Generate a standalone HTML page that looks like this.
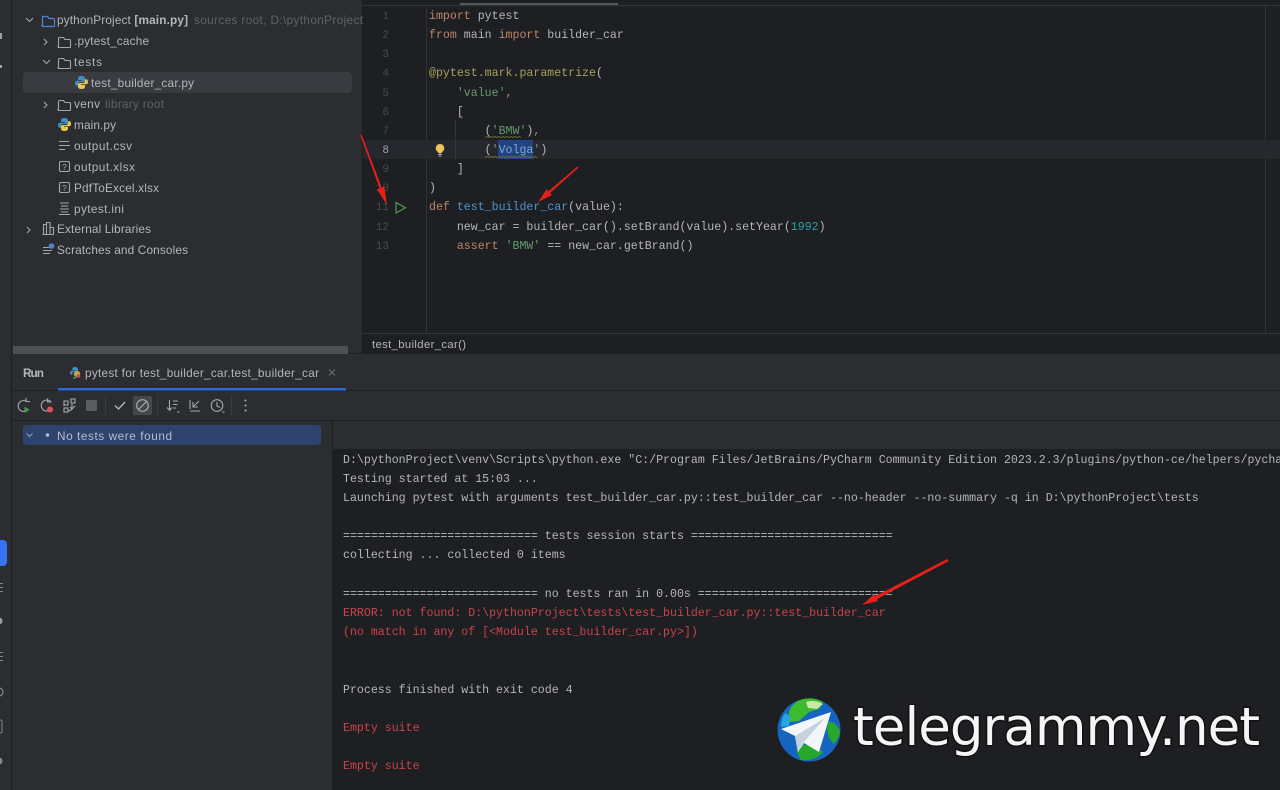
<!DOCTYPE html>
<html lang="en">
<head>
<meta charset="utf-8">
<title>PyCharm pytest</title>
<style>
html,body{margin:0;padding:0;width:1280px;height:790px;overflow:hidden;background:#1e1f22}
svg{display:block;position:absolute;left:0;top:0;filter:blur(.3px)}
.s{font-family:"Liberation Sans",sans-serif;font-size:11.8px;fill:#b4b6bc}
.g{fill:#5f6268}
.m{font-family:"Liberation Mono",monospace;font-size:11.6px;fill:#b4b6bc;white-space:pre}
.k{fill:#bd8468}.st{fill:#639c6b}.d{fill:#a6a25c}.f{fill:#4f93cc}.n{fill:#2a9fa9}
.l{font-family:"Liberation Mono",monospace;font-size:11px;fill:#484b52}
.e{fill:#c9434b}
.i{fill:none;stroke:#a5a7ad;stroke-width:1.1}
</style>
</head>
<body>
<svg width="1280" height="790" viewBox="0 0 1280 790" xmlns="http://www.w3.org/2000/svg">
<!-- panels -->
<rect x="0" y="0" width="1280" height="790" fill="#1e1f22"/>
<rect x="0" y="0" width="362" height="354" fill="#2b2d30"/>
<rect x="0" y="354" width="1280" height="436" fill="#2b2d30"/>
<rect x="333" y="449" width="947" height="341" fill="#1e1f22"/>
<rect x="11" y="0" width="1" height="790" fill="#1e1f22"/>
<rect x="362" y="0" width="1" height="354" fill="#1e1f22"/>
<rect x="362" y="5" width="918" height="1" fill="#34363a"/>
<rect x="460" y="3" width="158" height="2" fill="#55575c"/>
<rect x="362" y="333" width="918" height="1" fill="#34363a"/>
<rect x="426" y="6" width="1" height="327" fill="#303236"/>
<rect x="1265" y="6" width="1" height="327" fill="#303236"/>
<rect x="12" y="353" width="1268" height="1" fill="#1e1f22"/>
<rect x="12" y="390" width="1268" height="1" fill="#1e1f22"/>
<rect x="12" y="420" width="1268" height="1" fill="#1e1f22"/>
<rect x="332" y="420" width="1" height="370" fill="#1e1f22"/>

<!-- left strip -->
<rect x="-6" y="540" width="13" height="26" rx="4" fill="#3574f0"/>
<rect x="0" y="33" width="2" height="6" fill="#a0a2a8"/>
<rect x="0" y="65" width="2" height="3" fill="#a0a2a8"/>
<rect x="0" y="583" width="3" height="1" fill="#85878c"/><rect x="0" y="587" width="3" height="1" fill="#85878c"/><rect x="0" y="591" width="3" height="1" fill="#85878c"/>
<circle cx="-1" cy="621" r="3.5" fill="#9a9ca2"/>
<rect x="0" y="652" width="3" height="1" fill="#85878c"/><rect x="0" y="656" width="3" height="1" fill="#85878c"/><rect x="0" y="660" width="3" height="1" fill="#85878c"/>
<circle cx="-1" cy="692" r="4" fill="none" stroke="#85878c" stroke-width="1.2"/>
<rect x="-5" y="720" width="7" height="13" rx="1.5" fill="none" stroke="#85878c"/>
<circle cx="-1" cy="761" r="3.5" fill="#85878c"/>

<!-- project tree -->
<rect x="23" y="72" width="329" height="21" rx="4" fill="#393b40"/>
<path d="M26 18l3.5 3.5 3.5-3.5" class="i"/>
<path d="M44 39l3 3-3 3" class="i"/>
<path d="M43 60l3.5 3.5 3.5-3.5" class="i"/>
<path d="M44 102l3 3-3 3" class="i"/>
<path d="M27 227l3 3-3 3" class="i"/>
<path d="M42.500 25.500v-8a1 1 0 0 1 1-1h4l1.500 2h4.500a1 1 0 0 1 1 1v6a1 1 0 0 1-1 1h-10.500a1 1 0 0 1-1-.999z" fill="none" stroke="#4f83d6" stroke-width="1.2"/>
<path d="M58.500 46.500v-8a1 1 0 0 1 1-1h4l1.500 2h4.500a1 1 0 0 1 1 1v6a1 1 0 0 1-1 1h-10.500a1 1 0 0 1-1-1z" class="i"/>
<path d="M58.500 67.500v-8a1 1 0 0 1 1-1h4l1.500 2h4.500a1 1 0 0 1 1 1v6a1 1 0 0 1-1 1h-10.500a1 1 0 0 1-1-1z" class="i"/>
<path d="M58.500 109.500v-8a1 1 0 0 1 1-1h4l1.500 2h4.500a1 1 0 0 1 1 1v6a1 1 0 0 1-1 1h-10.500a1 1 0 0 1-1-1z" class="i"/>

<!-- python icons -->
<g transform="translate(75,76)">
<path d="M6.500 0C4 0 3 1 3 2.500V4h4v.8H1.500C.5 4.800 0 6 0 7s.5 2.800 1.500 2.800H3V8c0-1 .8-2 2-2h3.500C9.500 6 10 5.200 10 4.500V2.500C10 1 9 0 6.500 0z" fill="#3f8fc4"/>
<path d="M6.500 13c2.500 0 3.500-1 3.500-2.500V9H6v-.8h5.500c1 0 1.500-1.200 1.500-2.200s-.5-2.800-1.500-2.800H10V5c0 1-.8 2-2 2H4.500C3.500 7 3 7.800 3 8.500v2C3 12 4 13 6.500 13z" fill="#e9c84e"/>
</g>
<g transform="translate(58,118)">
<path d="M6.500 0C4 0 3 1 3 2.500V4h4v.8H1.500C.5 4.800 0 6 0 7s.5 2.800 1.500 2.800H3V8c0-1 .8-2 2-2h3.500C9.500 6 10 5.200 10 4.500V2.500C10 1 9 0 6.500 0z" fill="#3f8fc4"/>
<path d="M6.500 13c2.500 0 3.500-1 3.500-2.500V9H6v-.8h5.500c1 0 1.500-1.200 1.500-2.200s-.5-2.800-1.500-2.800H10V5c0 1-.8 2-2 2H4.500C3.500 7 3 7.800 3 8.500v2C3 12 4 13 6.500 13z" fill="#e9c84e"/>
</g>
<!-- csv -->
<path d="M59 141.500h10M59 145.500h11M59 149.500h6" class="i"/>
<!-- unknown files -->
<rect x="59.500" y="161.500" width="10" height="10" rx="1.500" class="i"/>
<text x="62" y="170" font-family="Liberation Sans" font-size="8.500" fill="#a5a7ad">?</text>
<rect x="59.500" y="182.500" width="10" height="10" rx="1.500" class="i"/>
<text x="62" y="191" font-family="Liberation Sans" font-size="8.500" fill="#a5a7ad">?</text>
<!-- ini -->
<path d="M60 203h9M61 206h7M60 209h9M61 212h7M59 214.500h11" class="i"/>
<!-- libraries -->
<path d="M43.500 234.500v-10h3v10M46.500 234.500v-12h3.500v12M50 234.500v-7h3.500v7M42.500 234.500h11.500" class="i"/>
<!-- scratches -->
<path d="M43 247.500h8M43 250.500h9M43 253.500h7" class="i"/>
<circle cx="51.500" cy="246" r="2.800" fill="#4f83d6"/>

<text class="s" x="57" y="24" textLength="131" lengthAdjust="spacing">pythonProject <tspan font-weight="bold">[main.py]</tspan></text>
<text class="s g" x="194" y="24" textLength="169" lengthAdjust="spacing">sources root,  D:\pythonProject</text>
<text class="s" x="74" y="45" textLength="75" lengthAdjust="spacing">.pytest_cache</text>
<text class="s" x="74" y="66" textLength="28" lengthAdjust="spacing">tests</text>
<text class="s" x="91" y="87" textLength="103" lengthAdjust="spacing">test_builder_car.py</text>
<text class="s" x="74" y="108" textLength="26" lengthAdjust="spacing">venv</text>
<text class="s g" x="105" y="108" textLength="59" lengthAdjust="spacing">library root</text>
<text class="s" x="74" y="129" textLength="42" lengthAdjust="spacing">main.py</text>
<text class="s" x="74" y="150" textLength="58" lengthAdjust="spacing">output.csv</text>
<text class="s" x="74" y="171" textLength="61" lengthAdjust="spacing">output.xlsx</text>
<text class="s" x="74" y="192" textLength="85" lengthAdjust="spacing">PdfToExcel.xlsx</text>
<text class="s" x="74" y="213" textLength="50" lengthAdjust="spacing">pytest.ini</text>
<text class="s" x="57" y="233" textLength="94" lengthAdjust="spacing">External Libraries</text>
<text class="s" x="57" y="254" textLength="131" lengthAdjust="spacing">Scratches and Consoles</text>
<rect x="13" y="346" width="335" height="8" fill="#4e5054"/>

<!-- editor -->
<rect x="363" y="140" width="917" height="19" fill="#26282d"/>
<rect x="498" y="140" width="35" height="19" fill="#214283"/>
<rect x="455" y="120" width="1" height="40" fill="#34363a"/>
<path d="M485 137.500l2-1 2 1 2-1 2 1 2-1 2 1 2-1 2 1 2-1 2 1 2-1 2 1 2-1 2 1 2-1 2 1 2-1 2 1" fill="none" stroke="#77753a" stroke-width=".8"/>
<path d="M485 157.500l2-1 2 1 2-1 2 1 2-1 2 1 2-1 2 1 2-1 2 1 2-1 2 1 2-1 2 1 2-1 2 1 2-1 2 1 2-1 2 1 2-1 2 1 2-1 2 1 2-1 2 1" fill="none" stroke="#77753a" stroke-width=".8"/>
<g transform="translate(0,-1)">
<text class="l" text-anchor="end" x="389" y="20">1</text>
<text class="l" text-anchor="end" x="389" y="39">2</text>
<text class="l" text-anchor="end" x="389" y="58">3</text>
<text class="l" text-anchor="end" x="389" y="77">4</text>
<text class="l" text-anchor="end" x="389" y="97">5</text>
<text class="l" text-anchor="end" x="389" y="116">6</text>
<text class="l" text-anchor="end" x="389" y="135">7</text>
<text class="l" text-anchor="end" x="389" y="154" style="fill:#9fa1a8">8</text>
<text class="l" text-anchor="end" x="389" y="173">9</text>
<text class="l" text-anchor="end" x="389" y="192">10</text>
<text class="l" text-anchor="end" x="389" y="211">11</text>
<text class="l" text-anchor="end" x="389" y="231">12</text>
<text class="l" text-anchor="end" x="389" y="250">13</text>
</g>
<path d="M396 202.500v10.500l9.500-5.200z" fill="none" stroke="#4f9a53" stroke-width="1.200"/>
<!-- bulb -->
<path d="M440 144a4.300 4.300 0 0 0-2.400 7.800c.5.4.7 1 .7 1.400h3.400c0-.5.2-1 .7-1.400A4.300 4.300 0 0 0 440 144z" fill="#f2c55c"/>
<path d="M438.300 154.500h3.400M438.800 156h2.400" stroke="#b7b9bd" stroke-width="1"/>

<g transform="translate(0,-1)">
<text class="m" x="429" y="20" xml:space="preserve"><tspan class="k">import</tspan> pytest</text>
<text class="m" x="429" y="39" xml:space="preserve"><tspan class="k">from</tspan> main <tspan class="k">import</tspan> builder_car</text>
<text class="m d" x="429" y="77" xml:space="preserve">@pytest.mark.parametrize<tspan style="fill:#b4b6bc">(</tspan></text>
<text class="m" x="429" y="97" xml:space="preserve">    <tspan class="st">'value'</tspan><tspan class="k">,</tspan></text>
<text class="m" x="429" y="116" xml:space="preserve">    [</text>
<text class="m" x="429" y="135" xml:space="preserve">        (<tspan class="st">'BMW'</tspan>)<tspan class="k">,</tspan></text>
<text class="m" x="429" y="154" xml:space="preserve">        (<tspan class="st">'</tspan><tspan style="fill:#7fa8c9">Volga</tspan><tspan class="st">'</tspan>)</text>
<text class="m" x="429" y="173" xml:space="preserve">    ]</text>
<text class="m" x="429" y="192" xml:space="preserve">)</text>
<text class="m" x="429" y="211" xml:space="preserve"><tspan class="k">def</tspan> <tspan class="f">test_builder_car</tspan>(value):</text>
<text class="m" x="429" y="231" xml:space="preserve">    new_car = builder_car().setBrand(value).setYear(<tspan class="n">1992</tspan>)</text>
<text class="m" x="429" y="250" xml:space="preserve">    <tspan class="k">assert</tspan> <tspan class="st">'BMW'</tspan> == new_car.getBrand()</text>
</g>
<text class="s" x="372" y="348" textLength="94" lengthAdjust="spacing" style="font-size:11.3px">test_builder_car()</text>

<!-- run panel header -->
<text class="s" x="23" y="377" textLength="21" lengthAdjust="spacing" font-weight="bold">Run</text>
<g transform="translate(70,367)">
<path d="M5 0C3 0 2.300 .8 2.300 2v1.200h3.200v.6H1.200C.4 3.800 0 4.800 0 5.600s.4 2.200 1.200 2.200h1.100V6.400c0-.8.600-1.600 1.600-1.600h2.800c.8 0 1.200-.6 1.200-1.200V2C8 .8 7 0 5 0z" fill="#3f8fc4"/>
<circle cx="7" cy="7" r="3.200" fill="#c9a24a"/>
<path d="M3 11l2 0 1-2" fill="none" stroke="#3e9a55" stroke-width="1.500"/>
<circle cx="8.500" cy="9" r="1.800" fill="#c6503f"/>
</g>
<text class="s" x="85" y="377" textLength="234" lengthAdjust="spacing">pytest for test_builder_car.test_builder_car</text>
<path d="M329 369.500l6 6M335 369.500l-6 6" stroke="#6d6f75" stroke-width="1"/>
<rect x="58" y="388" width="288" height="2.500" fill="#2f69d8"/>

<!-- toolbar -->
<rect x="133" y="396" width="19" height="19" rx="2" fill="#45474c"/>
<path d="M27.500 402a5.500 5.500 0 1 0 0 8" class="i"/><path d="M24 399v3.500h4" class="i" transform="translate(2,-1)"/>
<path d="M24.500 406.500v6.500l5-3.200z" fill="#4f9a53"/>
<path d="M51 402a5.500 5.500 0 1 0-1 8" class="i"/><path d="M47.500 398.500v3.500h4" class="i"/>
<circle cx="50" cy="409.500" r="3" fill="#e0525a"/>
<rect x="64" y="401" width="4" height="4" class="i"/><rect x="71" y="399" width="4" height="4" class="i"/><rect x="64" y="408" width="4" height="4" class="i"/>
<path d="M64 406c0-2 0-4 0-4M72 404v3c0 2-1 4-4 4M75 406l-3 3-2-2" class="i"/>
<rect x="86" y="400" width="11" height="11" rx="1.500" fill="#5a5c61"/>
<rect x="105" y="395" width="1" height="20" fill="#393b40"/>
<path d="M115 405.500l3.500 3.500 6.500-7" fill="none" stroke="#b4b6bc" stroke-width="1.400"/>
<circle cx="142.500" cy="405.500" r="5.800" fill="none" stroke="#a5a7ad" stroke-width="1.200"/>
<path d="M138.500 409.500l8-8" stroke="#a5a7ad" stroke-width="1.200"/>
<rect x="157" y="395" width="1" height="20" fill="#393b40"/>
<path d="M169.500 400v10M167 407.500l2.500 2.800 2.500-2.800M173 401h5M173 404.500h4.500M173 408h3M177 412h2.500" class="i"/>
<path d="M190 411h10M190 400v9M199 401l-6 6M193 402v5h5" class="i"/>
<circle cx="217" cy="405.500" r="5.800" class="i"/>
<path d="M217 402v4l3 1.500M222 412h2.500" class="i"/>
<rect x="231" y="395" width="1" height="20" fill="#393b40"/>
<circle cx="245.500" cy="400.500" r="1" fill="#b4b6bc"/><circle cx="245.500" cy="405.500" r="1" fill="#b4b6bc"/><circle cx="245.500" cy="410.500" r="1" fill="#b4b6bc"/>

<!-- tests tree -->
<rect x="23" y="425" width="298" height="20" rx="4" fill="#2e436e"/>
<path d="M26.500 433.500l3 3 3-3" fill="none" stroke="#8fa0c4" stroke-width="1"/>
<circle cx="47.500" cy="435" r="1.700" fill="#b6bdd0"/>
<text class="s" x="57" y="440" textLength="115" lengthAdjust="spacing" style="fill:#b4bccd">No tests were found</text>

<!-- console -->
<g transform="translate(0,-1)">
<text class="m" x="343" y="464" xml:space="preserve">D:\pythonProject\venv\Scripts\python.exe "C:/Program Files/JetBrains/PyCharm Community Edition 2023.2.3/plugins/python-ce/helpers/pycharm/_jb_pytest_runner.py"</text>
<text class="m" x="343" y="483">Testing started at 15:03 ...</text>
<text class="m" x="343" y="502" xml:space="preserve">Launching pytest with arguments test_builder_car.py::test_builder_car --no-header --no-summary -q in D:\pythonProject\tests</text>
<text class="m" x="343" y="540" xml:space="preserve">============================ tests session starts =============================</text>
<text class="m" x="343" y="559" xml:space="preserve">collecting ... collected 0 items</text>
<text class="m" x="343" y="598" xml:space="preserve">============================ no tests ran in 0.00s ============================</text>
<text class="m e" x="343" y="617" xml:space="preserve">ERROR: not found: D:\pythonProject\tests\test_builder_car.py::test_builder_car</text>
<text class="m e" x="343" y="636" xml:space="preserve">(no match in any of [&lt;Module test_builder_car.py&gt;])</text>
<text class="m" x="343" y="694" xml:space="preserve">Process finished with exit code 4</text>
<text class="m e" x="343" y="732">Empty suite</text>
<text class="m e" x="343" y="770">Empty suite</text>
</g>

<!-- red arrows -->
<path d="M361.700 134.750L381.800 187.700L384.400 186.700L387 205L377 189.500L379.600 188.500L360.300 135.250z" fill="#e3201b"/>
<path d="M578.500 167.600L550.100 193L551.900 195.100L538 202L546.700 189.100L548.500 191.200L577.500 166.400z" fill="#e3201b"/>
<path d="M948.600 561.100L877 599.100L878.100 601.100L862 605L874.300 594.100L875.400 596.100L947.400 558.900z" fill="#e3201b"/>

<!-- watermark -->
<circle cx="809" cy="730" r="31.500" fill="#1565c0"/>
<path d="M795 703c8-6 20-6 28-1l-4 7-10 3-10 9-9 1c-3-7-1-14 5-19z" fill="#3dbb2e"/>
<path d="M806 702c6-2 12-1 17 2l-6 5-9-1z" fill="#c7e8a8"/>
<path d="M828 722c6-1 10 4 12 10-1 5-3 8-6 12l-5-6-2-9z" fill="#27a82b"/>
<path d="M797 744l18 2 8 6c-6 7-14 9-22 8-3-5-5-10-4-16z" fill="#27a82b"/>
<path d="M781 727c0-5 1-10 4-14l6 4-2 9z" fill="#29a5e6"/>
<path d="M831 712L781 729l14 7 3 16 6-9 15 9z" fill="#f2f6fa"/>
<path d="M795 736l30-18-22 25-5 9z" fill="#c5d2dc"/>
<text x="853" y="745" font-family="DejaVu Sans, sans-serif" font-size="53" textLength="407" lengthAdjust="spacing" fill="#f5f5f5" stroke="#111" stroke-width="3" paint-order="stroke">telegrammy.net</text>
</svg>
</body>
</html>
